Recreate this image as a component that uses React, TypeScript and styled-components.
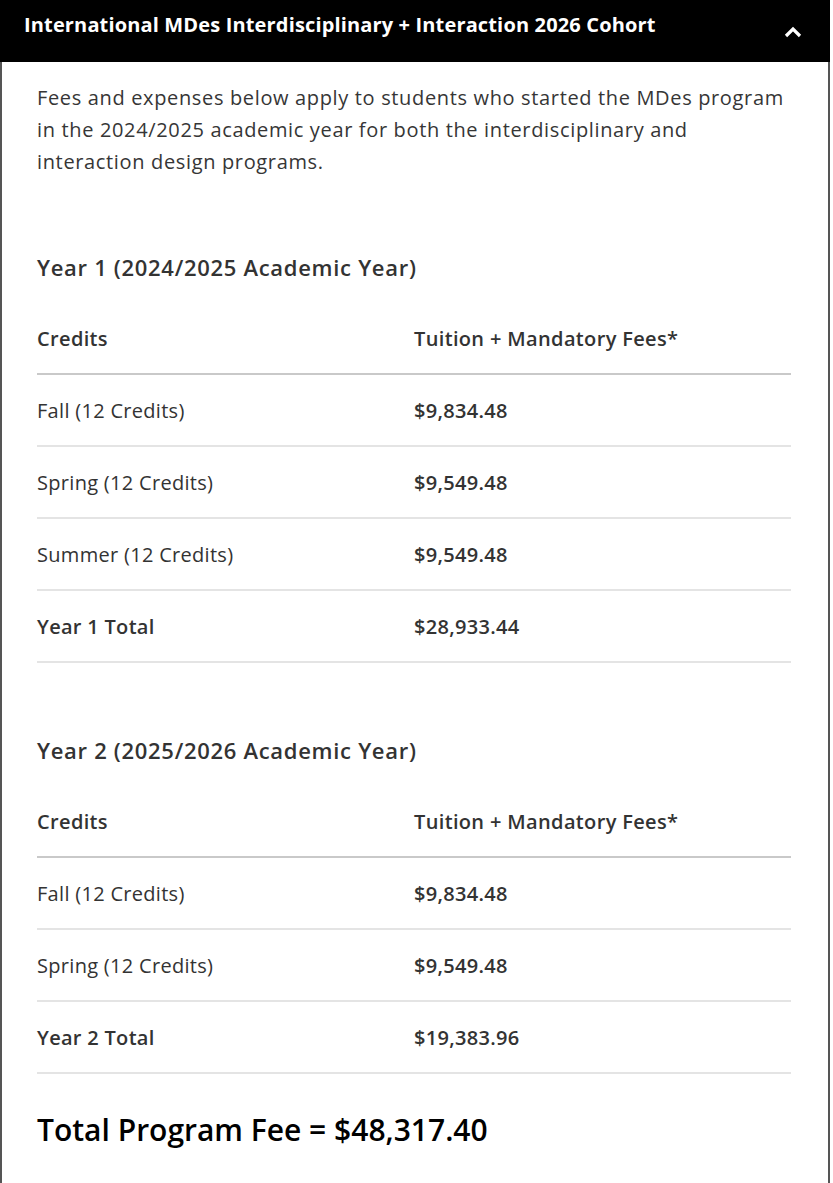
import React from "react";
import styled, { createGlobalStyle } from "styled-components";

const GlobalStyle = createGlobalStyle`
  html, body { margin: 0; padding: 0; background: #fff; }
  body { font-family: "Open Sans", Lato, Arial, sans-serif; color: #333; }
`;

const Panel = styled.section`
  width: 830px;
  box-sizing: border-box;
  border-left: 2px solid #555;
  border-right: 2px solid #555;
  min-height: 1183px;
`;

const Header = styled.header`
  height: 62px;
  background: #000;
  color: #fff;
  display: flex;
  align-items: center;
  justify-content: space-between;
  padding: 0 24px 0 24px;
  margin: 0 -2px;
`;

const HeaderTitle = styled.h2`
  margin: 0;
  font-size: 20px;
  font-weight: 700;
  letter-spacing: 0.15px;
  padding-bottom: 13px;
`;

const Chevron = styled.svg`
  width: 18px;
  height: 12px;
  margin-top: 1px;
  margin-right: 4px;
`;

const Body = styled.div`
  padding: 20px 37px 0 35px;
`;

const Intro = styled.p`
  margin: 0;
  font-size: 20px;
  line-height: 32px;
  letter-spacing: 0.65px;
  color: #363636;
`;

const YearHeading = styled.h3<{ $top: number }>`
  margin: ${(p) => p.$top}px 0 21px;
  font-size: 22px;
  line-height: 30px;
  font-weight: 600;
  letter-spacing: 0.7px;
  color: #333;
`;

const Table = styled.table`
  width: 100%;
  border-collapse: collapse;
  table-layout: fixed;
`;

const HeadCell = styled.th`
  height: 70px;
  text-align: left;
  font-size: 20px;
  font-weight: 600;
  letter-spacing: 0.35px;
  color: #333;
  padding: 0;
  border-bottom: 2px solid #c9c9c9;
`;

const Cell = styled.td<{ $bold?: boolean }>`
  height: 70px;
  font-size: 20px;
  font-weight: ${(p) => (p.$bold ? 600 : 400)};
  letter-spacing: 0.3px;
  color: #333;
  padding: 0;
  border-bottom: 2px solid #e4e4e4;
`;

const Total = styled.p`
  margin: 36px 0 0;
  font-size: 30px;
  line-height: 40px;
  font-weight: 600;
  color: #000;
`;

type Row = { label: string; amount: string; total?: boolean };

const year1: Row[] = [
  { label: "Fall (12 Credits)", amount: "$9,834.48" },
  { label: "Spring (12 Credits)", amount: "$9,549.48" },
  { label: "Summer (12 Credits)", amount: "$9,549.48" },
  { label: "Year 1 Total", amount: "$28,933.44", total: true },
];

const year2: Row[] = [
  { label: "Fall (12 Credits)", amount: "$9,834.48" },
  { label: "Spring (12 Credits)", amount: "$9,549.48" },
  { label: "Year 2 Total", amount: "$19,383.96", total: true },
];

const FeeTable = ({ rows }: { rows: Row[] }) => (
  <Table>
    <thead>
      <tr>
        <HeadCell>Credits</HeadCell>
        <HeadCell>Tuition + Mandatory Fees*</HeadCell>
      </tr>
    </thead>
    <tbody>
      {rows.map((r) => (
        <tr key={r.label}>
          <Cell $bold={r.total}>{r.label}</Cell>
          <Cell $bold>{r.amount}</Cell>
        </tr>
      ))}
    </tbody>
  </Table>
);

export default function App() {
  return (
    <>
      <GlobalStyle />
      <Panel>
        <Header>
          <HeaderTitle>International MDes Interdisciplinary + Interaction 2026 Cohort</HeaderTitle>
          <Chevron viewBox="0 0 18 12">
            <polyline points="2,10 9,3 16,10" fill="none" stroke="#fff" strokeWidth="3.2" />
          </Chevron>
        </Header>
        <Body>
          <Intro>
            Fees and expenses below apply to students who started the MDes program in the 2024/2025 academic
            year for both the interdisciplinary and interaction design programs.
          </Intro>
          <YearHeading $top={74}>Year 1 (2024/2025 Academic Year)</YearHeading>
          <FeeTable rows={year1} />
          <YearHeading $top={72}>Year 2 (2025/2026 Academic Year)</YearHeading>
          <FeeTable rows={year2} />
          <Total>Total Program Fee = $48,317.40</Total>
        </Body>
      </Panel>
    </>
  );
}
